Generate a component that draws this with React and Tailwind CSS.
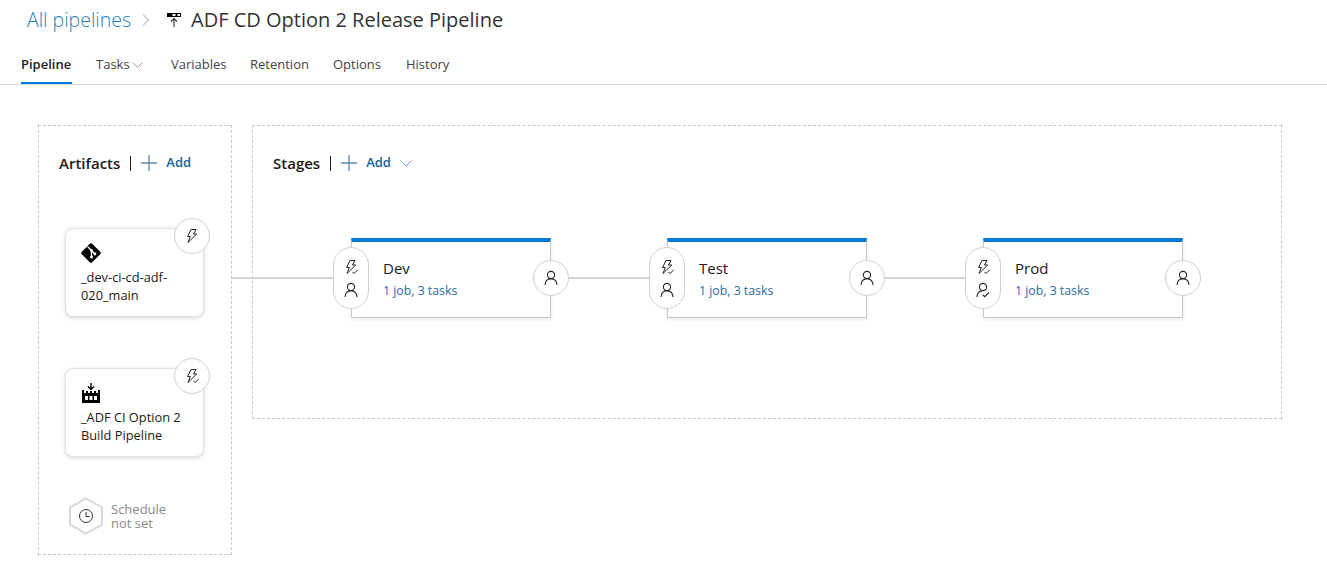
import { ChevronRight } from "lucide-react";

const font = { fontFamily: '"Open Sans", "Noto Sans", sans-serif' };

function BoltIcon({ check, className }) {
  return (
    <svg viewBox="0 0 16 16" fill="none" stroke="currentColor" strokeWidth="1" className={className}>
      <path d="M7 1.5h5L9.5 6h3.2L4 14.5 6.3 8.5H3.6z" strokeLinejoin="round" />
      {check && <path d="M9.5 13l1.6 1.6 3.6-3.8" />}
    </svg>
  );
}

function PersonIcon({ check, className }) {
  return (
    <svg viewBox="0 0 16 16" fill="none" stroke="currentColor" strokeWidth="1.1" className={className}>
      <circle cx="8" cy="5" r="3.6" />
      {check ? (
        <>
          <path d="M2 15c0-3.4 2.2-5.6 5-6.2" />
          <path d="M8 13l1.7 1.7 4.2-4.2" />
        </>
      ) : (
        <path d="M2 15c0-3.8 2.6-6.4 6-6.4s6 2.6 6 6.4" />
      )}
    </svg>
  );
}

function GitIcon() {
  return (
    <svg viewBox="0 0 20 20" className="w-5 h-5">
      <path d="M8.8.8a1.7 1.7 0 0 1 2.4 0l8 8a1.7 1.7 0 0 1 0 2.4l-8 8a1.7 1.7 0 0 1-2.4 0l-8-8a1.7 1.7 0 0 1 0-2.4z" fill="#000" />
      <path d="M6.5 3.5l4 4M10.5 7.5v6M10.5 7.5l3.5 3.5" stroke="#fff" strokeWidth="1.4" fill="none" />
      <circle cx="10.5" cy="7.5" r="1.4" fill="#fff" />
      <circle cx="10.5" cy="14" r="1.5" fill="#fff" />
      <circle cx="14" cy="11" r="1.4" fill="#fff" />
    </svg>
  );
}

function BuildIcon() {
  return (
    <svg viewBox="0 0 20 20" className="w-5 h-5">
      <path d="M10 0v6M7 3.5l3 3 3-3" stroke="#000" strokeWidth="1.4" fill="none" />
      <path d="M1 7h2v3h14V7h2v13H1z" fill="#000" />
      <rect x="5" y="8" width="2" height="2" fill="#000" />
      <rect x="9" y="8" width="2" height="2" fill="#000" />
      <rect x="13" y="8" width="2" height="2" fill="#000" />
      <rect x="4" y="13" width="3" height="4" fill="#fff" />
      <rect x="8.5" y="13" width="3" height="4" fill="#fff" />
      <rect x="13" y="13" width="3" height="4" fill="#fff" />
    </svg>
  );
}

function ReleaseIcon() {
  return (
    <svg viewBox="0 0 16 16" className="w-4 h-4">
      <path d="M1 1h14v4H1z" fill="#000" />
      <rect x="6.5" y="2" width="3" height="2" fill="#fff" />
      <rect x="11.5" y="2" width="2.5" height="2" fill="#fff" />
      <path d="M8 15V7M5 9.5L8 6.5l3 3" stroke="#333" strokeWidth="1.1" fill="none" />
    </svg>
  );
}

function ClockHex() {
  return (
    <svg viewBox="0 0 36 38" className="w-9 h-[38px] shrink-0">
      <path d="M18 1.5L34 10.5v17L18 36.5 2 27.5v-17z" fill="#fff" stroke="#d9d9d9" strokeWidth="2" />
      <circle cx="18" cy="19" r="6.5" fill="none" stroke="#333" strokeWidth="1" />
      <path d="M18 15v4.5h3.5" fill="none" stroke="#333" strokeWidth="1" />
    </svg>
  );
}

function Round({ children, className }) {
  return (
    <div className={`absolute z-10 w-9 h-9 rounded-full bg-white border border-[#d0d0d0] flex items-center justify-center text-[#222] ${className}`}>
      {children}
    </div>
  );
}

function ArtifactCard({ icon, lines, check, className }) {
  return (
    <div className={`relative w-[139px] h-[89px] rounded-lg bg-white border border-[#e4e4e4] shadow-[0_1px_4px_rgba(0,0,0,0.16)] pl-[15px] pt-[14px] ${className}`}>
      <Round className="-top-[11px] -right-[7px]">
        <BoltIcon check={check} className="w-4 h-4" />
      </Round>
      {icon}
      <div className="mt-[5px] text-[12.8px] leading-[18px] text-[#1a1a1a] whitespace-nowrap">
        {lines.map((l) => (
          <div key={l}>{l}</div>
        ))}
      </div>
    </div>
  );
}

function Stage({ name, approved }) {
  return (
    <div className="relative shrink-0 w-[200px] h-20 bg-white border-t-4 border-t-[#0078d4] border-x border-b border-x-[#c8c8c8] border-b-[#c8c8c8] shadow-[0_2px_4px_rgba(0,0,0,0.08)] pl-[31px] pt-[16px]">
      <div className="absolute z-10 -left-[19px] top-[5px] w-9 h-[62px] rounded-[18px] bg-white border border-[#d0d0d0] flex flex-col items-center justify-center gap-[7px] text-[#222]">
        <BoltIcon check className="w-4 h-4" />
        <PersonIcon check={approved} className="w-4 h-4" />
      </div>
      <div className="text-[15px] leading-5 text-[#1a1a1a]">{name}</div>
      <div className="mt-[5px] text-[12.3px] leading-4 text-[#1f6aa5]">1 job, 3 tasks</div>
      <Round className="-right-[19px] top-[18px]">
        <PersonIcon className="w-4 h-4" />
      </Round>
    </div>
  );
}

function Connector({ className }) {
  return <div className={`h-[2px] bg-[#d4d4d4] shrink-0 ${className}`} />;
}

function AddButton({ chevron }) {
  return (
    <div className="flex items-center">
      <div className="w-px h-[15px] bg-[#222] ml-[10px]" />
      <svg viewBox="0 0 16 16" className="w-4 h-4 ml-[10px]" stroke="#5f86a8" strokeWidth="1.3" fill="none">
        <path d="M8 0v16M0 8h16" />
      </svg>
      <span className="ml-[9px] text-[13px] font-semibold text-[#1b5f96]">Add</span>
      {chevron && (
        <svg viewBox="0 0 12 7" className="w-3 h-[7px] ml-[9px]" stroke="#6f9cc4" strokeWidth="1" fill="none">
          <path d="M.5.5L6 6 11.5.5" />
        </svg>
      )}
    </div>
  );
}

const tabs = [
  ["Pipeline", "w-[51px] mr-6"],
  ["Tasks", "w-[75px]"],
  ["Variables", "w-[79px]"],
  ["Retention", "w-[83px]"],
  ["Options", "w-[73px]"],
  ["History", "w-[46px]"],
];

export default function App() {
  return (
    <div className="w-[1327px] h-[562px] bg-white overflow-hidden" style={font}>
      <div className="h-[85px] border-b border-[#dcdcdc] pl-[21px]">
        <div className="flex items-center h-[39px] pl-[6px]">
          <span className="w-[104px] text-[19.5px] text-[#1f7fb8] font-light whitespace-nowrap">All pipelines</span>
          <ChevronRight className="w-5 h-5 ml-[5px] text-[#888]" strokeWidth={1} />
          <div className="ml-[10px]">
            <ReleaseIcon />
          </div>
          <span className="ml-[9px] text-[20px] text-[#333]">ADF CD Option 2 Release Pipeline</span>
        </div>
        <div className="flex h-[45px] pt-[9px] text-[13px] text-[#444]">
          {tabs.map(([t, w], i) => (
            <div key={t} className={`${w} relative flex items-center whitespace-nowrap border-b-2 ${i === 0 ? "font-semibold text-[#222] border-[#0078d4]" : "border-transparent"}`}>
              {t}
              {t === "Tasks" && (
                <svg viewBox="0 0 11 6" className="w-[11px] h-[6px] ml-[2px]" stroke="#999" strokeWidth="1" fill="none">
                  <path d="M.5.5L5.5 5.5 10.5.5" />
                </svg>
              )}
            </div>
          ))}
        </div>
      </div>

      <div className="flex items-start pt-10 pl-[38px] gap-5">
        <div className="w-[194px] h-[430px] border border-dashed border-[#c8c8c8] pl-[20px] pt-[25px]">
          <div className="flex items-center h-6">
            <span className="text-[15px] font-semibold text-[#1a1a1a]">Artifacts</span>
            <AddButton />
          </div>
          <ArtifactCard
            className="ml-[6px] mt-[53px]"
            icon={<GitIcon />}
            lines={["_dev-ci-cd-adf-", "020_main"]}
          />
          <ArtifactCard
            className="ml-[6px] mt-[51px]"
            check
            icon={<BuildIcon />}
            lines={["_ADF CI Option 2", "Build Pipeline"]}
          />
          <div className="flex items-center ml-[9px] mt-[40px] gap-[7px]">
            <ClockHex />
            <div className="text-[13px] leading-[14px] text-[#8a8a8a]">
              Schedule
              <br />
              not set
            </div>
          </div>
        </div>

        <div className="w-[1030px] h-[294px] border border-dashed border-[#c8c8c8] pl-[20px] pt-[25px]">
          <div className="flex items-center h-6">
            <span className="text-[15px] font-semibold text-[#1a1a1a]">Stages</span>
            <AddButton chevron />
          </div>
          <div className="flex items-center -ml-[41px] mt-[63px]">
            <Connector className="w-[119px]" />
            <Stage name="Dev" />
            <Connector className="w-[116px]" />
            <Stage name="Test" />
            <Connector className="w-[116px]" />
            <Stage name="Prod" approved />
          </div>
        </div>
      </div>
    </div>
  );
}
